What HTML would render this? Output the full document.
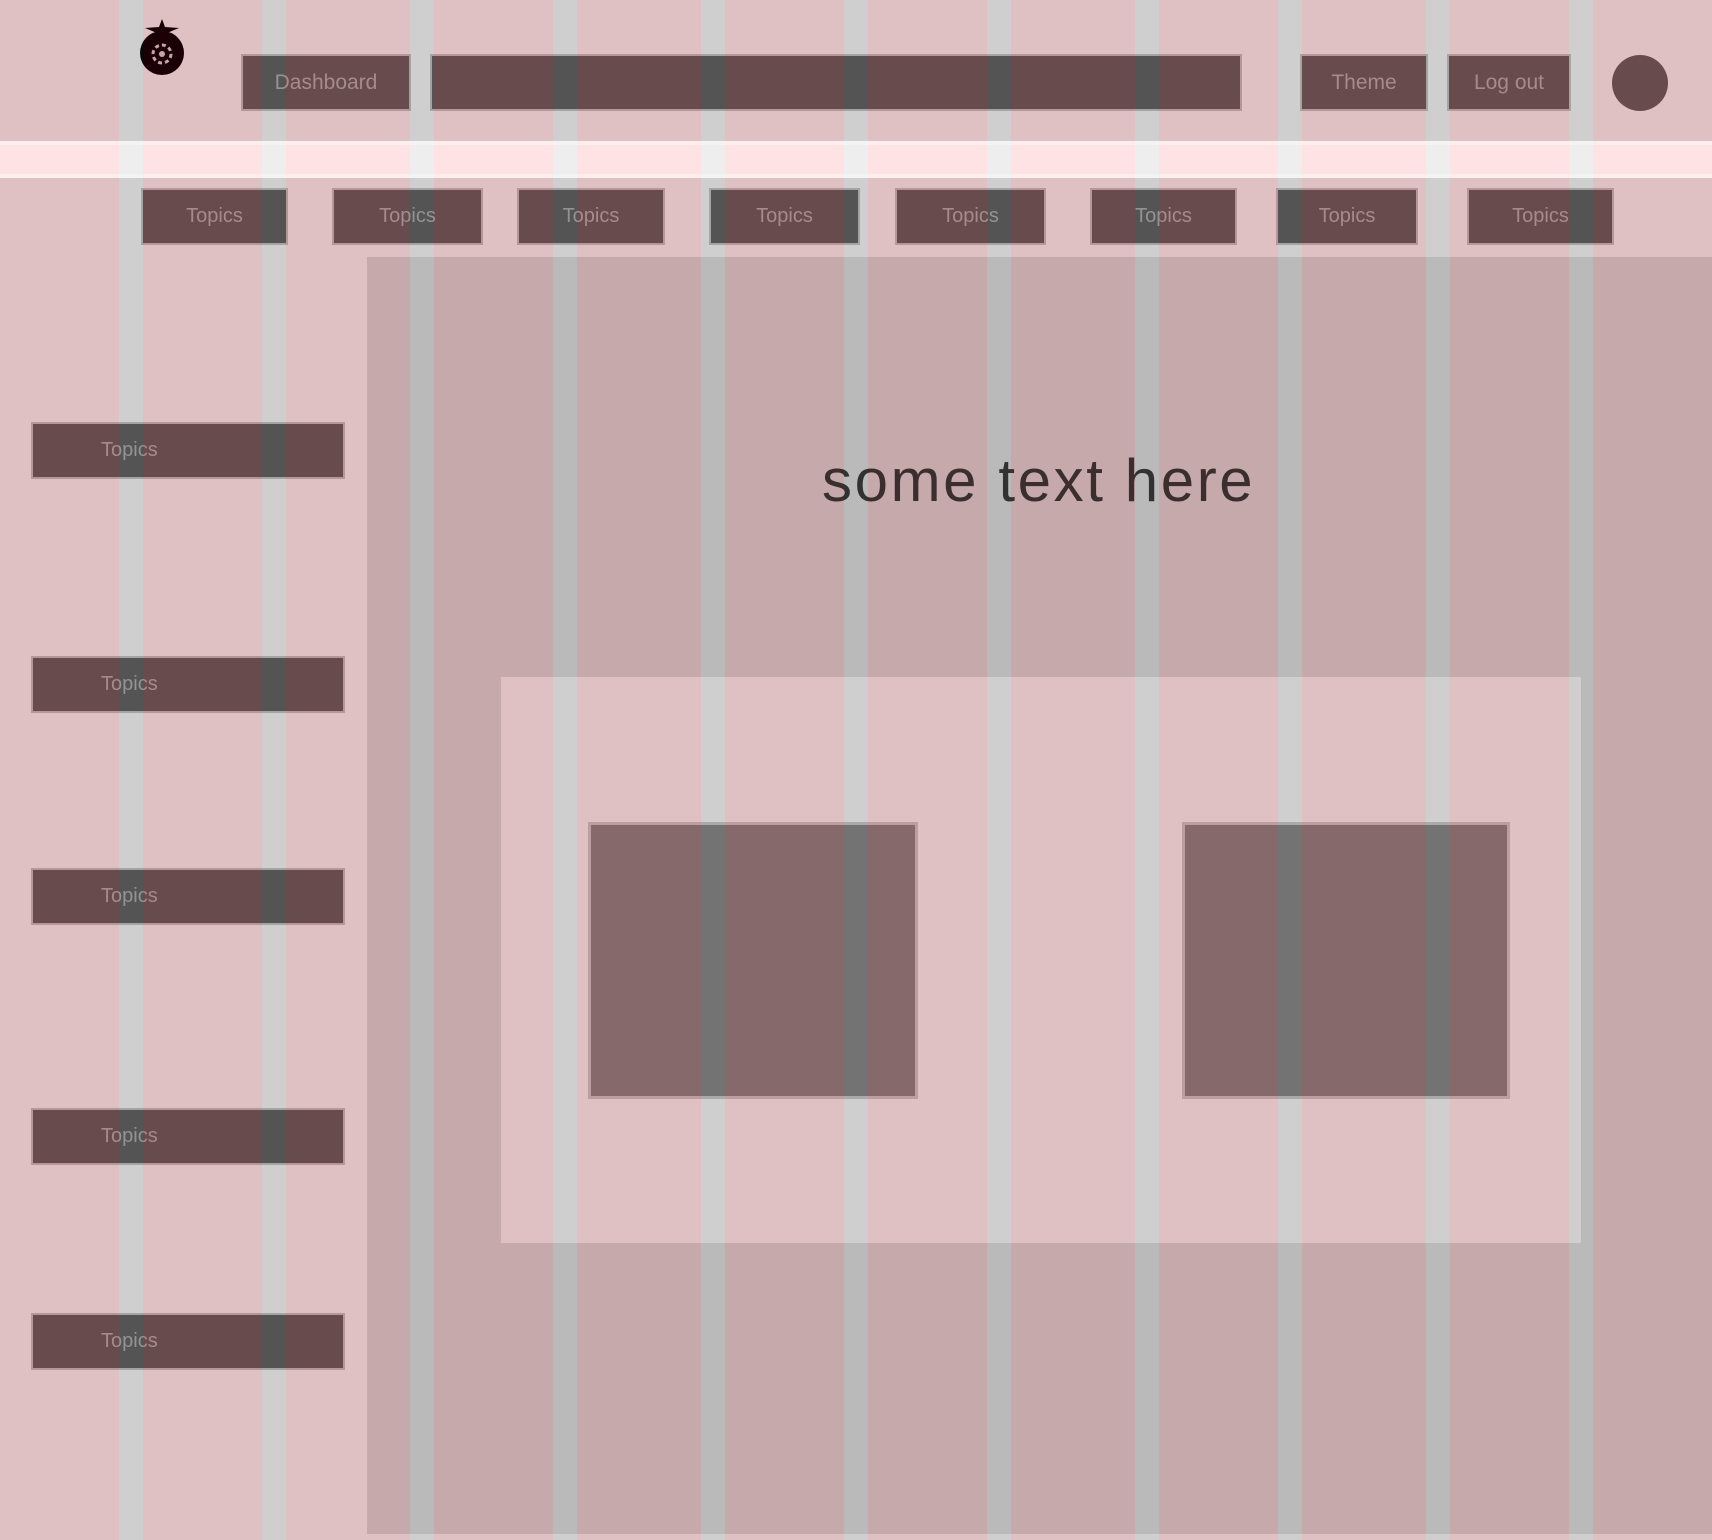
<!DOCTYPE html>
<html><head><meta charset="utf-8"><style>
*{margin:0;padding:0;box-sizing:border-box}
body{width:1712px;height:1540px;background:#dfc1c3;position:relative;overflow:hidden;font-family:"Liberation Sans",sans-serif}
.a{position:absolute}
.b{position:absolute;background:#674b4d;color:#a48c8d;font-size:20px;display:flex;align-items:center;justify-content:center;box-shadow:0 0 0 2px rgba(103,75,77,.35)}
.s{position:absolute;top:0;width:24px;height:1540px;background:#d0d0d0;mix-blend-mode:saturation}
.l{position:absolute;top:0;width:24px;height:1540px;background:#1a1a1a;mix-blend-mode:screen}
</style></head><body>
<div class="a" style="left:0;top:141px;width:1712px;height:37px;background:#fbeeee"></div>
<div class="a" style="left:0;top:145px;width:1712px;height:29px;background:#ffe3e4"></div>
<div class="a" style="left:367px;top:257px;width:1345px;height:1277px;background:#c6a9aa"></div>
<div class="a" style="left:501px;top:677px;width:1080px;height:566px;background:#dfc1c3"></div>
<div class="l" style="left:119px"></div>
<div class="l" style="left:262px"></div>
<div class="l" style="left:410px"></div>
<div class="l" style="left:553px"></div>
<div class="l" style="left:701px"></div>
<div class="l" style="left:844px"></div>
<div class="l" style="left:987px"></div>
<div class="l" style="left:1135px"></div>
<div class="l" style="left:1278px"></div>
<div class="l" style="left:1426px"></div>
<div class="l" style="left:1569px"></div>
<div class="a" style="left:591px;top:825px;width:324px;height:271px;background:#866a6b;box-shadow:0 0 0 3px rgba(134,106,107,.4)"></div>
<div class="a" style="left:1185px;top:825px;width:322px;height:271px;background:#866a6b;box-shadow:0 0 0 3px rgba(134,106,107,.4)"></div>
<div class="a" style="left:822px;top:446px;font-size:60px;color:#3a2e2f;letter-spacing:2.6px;white-space:nowrap">some text here</div>
<svg class="a" style="left:134px;top:16px" width="56" height="64" viewBox="0 0 56 64">
<circle cx="28" cy="37" r="22" fill="#1a0006"/>
<path d="M28 3 L31 11 L45 12 L33 17 L28 20 L23 17 L11 12 L25 11Z" fill="#1a0006"/>
<circle cx="28" cy="38" r="9" fill="none" stroke="#c9a4a7" stroke-width="3" stroke-dasharray="4 3"/>
<circle cx="28" cy="38" r="3" fill="#c9a4a7"/>
</svg>
<div class="b" style="left:243px;top:56px;width:166px;height:53px;font-size:21px">Dashboard</div>
<div class="b" style="left:432px;top:56px;width:808px;height:53px"></div>
<div class="b" style="left:1302px;top:56px;width:124px;height:53px;font-size:21px">Theme</div>
<div class="b" style="left:1449px;top:56px;width:120px;height:53px;font-size:21px">Log out</div>
<div class="a" style="left:1612px;top:55px;width:56px;height:56px;border-radius:50%;background:#674b4d"></div>
<div class="b" style="left:143px;top:190px;width:143px;height:53px">Topics</div>
<div class="b" style="left:334px;top:190px;width:147px;height:53px">Topics</div>
<div class="b" style="left:519px;top:190px;width:144px;height:53px">Topics</div>
<div class="b" style="left:711px;top:190px;width:147px;height:53px">Topics</div>
<div class="b" style="left:897px;top:190px;width:147px;height:53px">Topics</div>
<div class="b" style="left:1092px;top:190px;width:143px;height:53px">Topics</div>
<div class="b" style="left:1278px;top:190px;width:138px;height:53px">Topics</div>
<div class="b" style="left:1469px;top:190px;width:143px;height:53px">Topics</div>
<div class="b" style="left:33px;top:424px;width:310px;height:53px;justify-content:flex-start;padding-left:68px">Topics</div>
<div class="b" style="left:33px;top:658px;width:310px;height:53px;justify-content:flex-start;padding-left:68px">Topics</div>
<div class="b" style="left:33px;top:870px;width:310px;height:53px;justify-content:flex-start;padding-left:68px">Topics</div>
<div class="b" style="left:33px;top:1110px;width:310px;height:53px;justify-content:flex-start;padding-left:68px">Topics</div>
<div class="b" style="left:33px;top:1315px;width:310px;height:53px;justify-content:flex-start;padding-left:68px">Topics</div>
<div class="s" style="left:119px"></div>
<div class="s" style="left:262px"></div>
<div class="s" style="left:410px"></div>
<div class="s" style="left:553px"></div>
<div class="s" style="left:701px"></div>
<div class="s" style="left:844px"></div>
<div class="s" style="left:987px"></div>
<div class="s" style="left:1135px"></div>
<div class="s" style="left:1278px"></div>
<div class="s" style="left:1426px"></div>
<div class="s" style="left:1569px"></div>
</body></html>
